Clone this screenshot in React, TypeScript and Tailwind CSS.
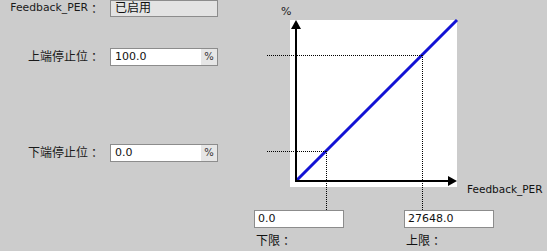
import React from "react";

const font = { fontFamily: '"DejaVu Sans", "Noto Sans CJK SC", sans-serif' };
const cjkColon = { fontFamily: '"Noto Sans CJK TC", sans-serif', textSpacingTrim: "space-all" } as React.CSSProperties;

function Colon() {
  return <span style={cjkColon} className="text-[12px]">：</span>;
}

function Row({ label, latin, h, children }: { label: string; latin?: boolean; h: string; children: React.ReactNode }) {
  return (
    <div className={`flex items-center ${h}`}>
      <div
        className={`w-[100px] h-full flex items-center justify-end whitespace-nowrap text-[#1a1a1a] ${latin ? "text-[10.8px]" : "text-[12px]"}`}
      >
        {label}
        <Colon />
      </div>
      <div className="ml-[10px]">{children}</div>
    </div>
  );
}

function PctInput({ value }: { value: string }) {
  return (
    <div className="flex w-[108px] h-[18px] border border-[#8c8c8c] bg-white">
      <div className="flex-1 pl-[4px] text-[11px] leading-[16px] text-[#111]">{value}</div>
      <div className="w-[16px] bg-[#e6e6e6] text-[10px] leading-[16px] text-center text-[#333]">%</div>
    </div>
  );
}

export default function App() {
  return (
    <div className="w-[547px] h-[251px] bg-[#cccccc] flex overflow-hidden" style={font}>
      <div className="w-[250px] flex flex-col">
        <Row label="Feedback_PER" latin h="h-[17px]">
          <div className="w-[108px] h-[17px] border border-[#8c8c8c] bg-[#e3e3e3] pl-[4px] text-[12px] leading-[15px] text-[#111]">已启用</div>
        </Row>
        <div className="mt-[31px]">
          <Row label="上端停止位" h="h-[18px]">
            <PctInput value="100.0" />
          </Row>
        </div>
        <div className="mt-[78px]">
          <Row label="下端停止位" h="h-[18px]">
            <PctInput value="0.0" />
          </Row>
        </div>
      </div>
      <div className="w-[297px] flex flex-col">
        <div className="relative h-[210px]">
          <svg className="absolute inset-0" width="297" height="210" viewBox="0 0 297 210">
            <rect x="40" y="20" width="167" height="167" fill="#ffffff" />
            <line x1="46" y1="181" x2="207" y2="20" stroke="#1212d4" strokeWidth="3" />
            <line x1="17" y1="55.5" x2="172" y2="55.5" stroke="#000" strokeWidth="1" strokeDasharray="1 1" />
            <line x1="172.5" y1="55" x2="172.5" y2="210" stroke="#000" strokeWidth="1" strokeDasharray="1 1" />
            <line x1="17" y1="151.5" x2="76" y2="151.5" stroke="#000" strokeWidth="1" strokeDasharray="1 1" />
            <line x1="76.5" y1="151" x2="76.5" y2="210" stroke="#000" strokeWidth="1" strokeDasharray="1 1" />
            <line x1="46" y1="28" x2="46" y2="182" stroke="#000" strokeWidth="2" />
            <line x1="45" y1="181" x2="199" y2="181" stroke="#000" strokeWidth="2" />
            <polygon points="46,20 41,29 51,29" fill="#000" />
            <polygon points="207,181 198,176 198,186" fill="#000" />
          </svg>
          <div className="absolute left-[31px] top-[5px] text-[11px] leading-[13px] text-[#222]">%</div>
          <div className="absolute left-[217px] top-[183px] text-[10.5px] leading-[13px] text-[#111]">Feedback_PER</div>
        </div>
        <div className="flex">
          <div className="ml-[4px] w-[90px] h-[18px] border border-[#8c8c8c] bg-white pl-[3px] text-[11px] leading-[16px] text-[#111]">0.0</div>
          <div className="ml-[60px] w-[90px] h-[18px] border border-[#8c8c8c] bg-white pl-[3px] text-[11px] leading-[16px] text-[#111]">27648.0</div>
        </div>
        <div className="flex mt-[5px] h-[16px] items-center text-[12px] text-[#111]">
          <div className="ml-[6px] w-[150px] h-full flex items-center">下限<Colon /></div>
          <div className="h-full flex items-center">上限<Colon /></div>
        </div>
      </div>
    </div>
  );
}
